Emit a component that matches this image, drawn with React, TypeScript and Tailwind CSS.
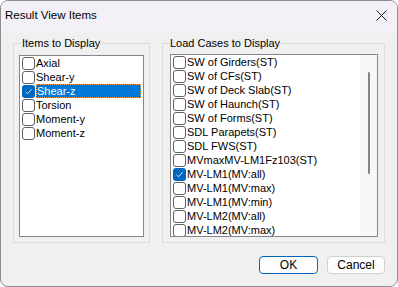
import React from 'react';

const loadCases = [
  { name: 'SW of Girders(ST)', checked: false },
  { name: 'SW of CFs(ST)', checked: false },
  { name: 'SW of Deck Slab(ST)', checked: false },
  { name: 'SW of Haunch(ST)', checked: false },
  { name: 'SW of Forms(ST)', checked: false },
  { name: 'SDL Parapets(ST)', checked: false },
  { name: 'SDL FWS(ST)', checked: false },
  { name: 'MVmaxMV-LM1Fz103(ST)', checked: false },
  { name: 'MV-LM1(MV:all)', checked: true },
  { name: 'MV-LM1(MV:max)', checked: false },
  { name: 'MV-LM1(MV:min)', checked: false },
  { name: 'MV-LM2(MV:all)', checked: false },
  { name: 'MV-LM2(MV:max)', checked: false },
];

const items = [
  { name: 'Axial', checked: false },
  { name: 'Shear-y', checked: false },
  { name: 'Shear-z', checked: true, selected: true },
  { name: 'Torsion', checked: false },
  { name: 'Moment-y', checked: false },
  { name: 'Moment-z', checked: false },
];

const CheckBox = ({ checked }: { checked: boolean }) =>
  checked ? (
    <span className="w-[13px] h-[13px] shrink-0 rounded-[3px] bg-[#0067c0] flex items-center justify-center">
      <svg width="9" height="9" viewBox="0 0 9 9">
        <path d="M1.5 4.8 L3.6 6.8 L7.6 2.2" fill="none" stroke="#cfe3f7" strokeWidth="1" />
      </svg>
    </span>
  ) : (
    <span className="w-[13px] h-[13px] shrink-0 rounded-[3px] border border-[#5f5f5f] bg-white" />
  );

const Row = ({ name, checked, selected }: { name: string; checked: boolean; selected?: boolean }) => (
  <div className="h-[14px] flex items-center">
    <CheckBox checked={checked} />
    <span
      className={
        selected
          ? 'ml-[1px] flex-1 mr-[2px] h-[14px] leading-[12px] bg-[#0078d7] text-white border border-dotted border-[#ffa040]'
          : 'ml-[1px] h-[14px] leading-[14px] whitespace-nowrap'
      }
    >
      {name}
    </span>
  </div>
);

export default function App() {
  return (
    <div
      className="w-[398px] h-[287px] bg-[#f0f0f0] rounded-[8px] border border-[#8e8e8e] overflow-hidden flex flex-col text-black"
      style={{ fontFamily: '"Liberation Sans", Arial, sans-serif' }}
    >
      <div className="h-[29px] shrink-0 bg-[#f3f1f7] flex items-center justify-between pl-[4px] pr-[10px]">
        <span className="text-[11.5px]">Result View Items</span>
        <svg width="11" height="11" viewBox="0 0 11 11">
          <path d="M0.5 0.5 L10.5 10.5 M10.5 0.5 L0.5 10.5" stroke="#1a1a1a" strokeWidth="1" />
        </svg>
      </div>

      <div className="flex gap-[12px] pl-[12px] pt-[6px] text-[11px]">
        <fieldset className="w-[137px] h-[207px] border border-[#dcdcdc] px-[5px] pb-[4px] min-w-0">
          <legend className="ml-[2px] px-[1px] leading-[14px]">Items to Display</legend>
          <div className="mt-[5px] h-[182px] border border-[#82868e] bg-white pl-[2px]">
            {items.map((it) => (
              <Row key={it.name} {...it} />
            ))}
          </div>
        </fieldset>

        <fieldset className="w-[223px] h-[207px] border border-[#dcdcdc] pl-[7px] pr-[6px] pb-[4px] min-w-0">
          <legend className="px-0 leading-[14px]">Load Cases to Display</legend>
          <div className="mt-[4px] h-[183px] border border-[#82868e] bg-white flex overflow-hidden">
            <div className="flex-1 pl-[2px] overflow-hidden">
              {loadCases.map((it) => (
                <Row key={it.name} {...it} />
              ))}
            </div>
            <div className="w-[17px] bg-[#f7f7f7] flex justify-center pt-[17px]">
              <div className="w-[2px] h-[102px] rounded-full bg-[#858585]" />
            </div>
          </div>
        </fieldset>
      </div>

      <div className="flex justify-end gap-[9px] pr-[12px] mt-[13px] text-[12px]">
        <button className="w-[59px] h-[18px] rounded-[4px] border border-[#0067c0] bg-[#fdfdfd] leading-[14px]">OK</button>
        <button className="w-[58px] h-[18px] rounded-[4px] border border-[#d0d0d0] bg-[#fdfdfd] leading-[14px]">Cancel</button>
      </div>
    </div>
  );
}
